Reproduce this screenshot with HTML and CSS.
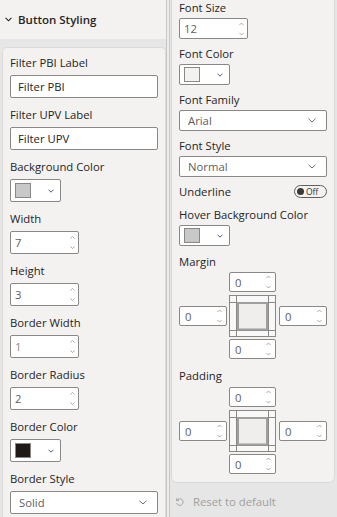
FILE: index.html
```html
<!DOCTYPE html>
<html>
<head>
<meta charset="utf-8">
<link rel="stylesheet" href="styles.css">
</head>
<body>
<div class="app">
  <div class="left">
    <div class="sec-head">
      <svg class="head-chev" width="7" height="5" viewBox="0 0 7 5"><path d="M0.6 0.8 L3.5 3.8 L6.4 0.8" fill="none" stroke="#252423" stroke-width="1.1"/></svg>
      <span>Button Styling</span>
    </div>
    <div class="band">
      <div class="card">
        <div class="field">
          <div class="label">Filter PBI Label</div>
          <div class="textbox">Filter PBI</div>
        </div>
        <div class="field">
          <div class="label">Filter UPV Label</div>
          <div class="textbox">Filter UPV</div>
        </div>
        <div class="field">
          <div class="label">Background Color</div>
          <div class="picker"><span class="swatch sw-gray"></span><svg class="pchev" width="6" height="4" viewBox="0 0 6 4"><path d="M0.5 0.7 L3 3.2 L5.5 0.7" fill="none" stroke="#3a4a66" stroke-width="0.9"/></svg></div>
        </div>
        <div class="field">
          <div class="label">Width</div>
          <div class="spin"><span>7</span><svg width="5" height="15" viewBox="0 0 5 15"><path d="M0.5 3.5 L2.5 1.5 L4.5 3.5 M0.5 11.5 L2.5 13.5 L4.5 11.5" fill="none" stroke="#a19f9d" stroke-width="0.9"/></svg></div>
        </div>
        <div class="field">
          <div class="label">Height</div>
          <div class="spin"><span>3</span><svg width="5" height="15" viewBox="0 0 5 15"><path d="M0.5 3.5 L2.5 1.5 L4.5 3.5 M0.5 11.5 L2.5 13.5 L4.5 11.5" fill="none" stroke="#a19f9d" stroke-width="0.9"/></svg></div>
        </div>
        <div class="field">
          <div class="label">Border Width</div>
          <div class="spin"><span class="light">1</span><svg width="5" height="15" viewBox="0 0 5 15"><path d="M0.5 3.5 L2.5 1.5 L4.5 3.5 M0.5 11.5 L2.5 13.5 L4.5 11.5" fill="none" stroke="#a19f9d" stroke-width="0.9"/></svg></div>
        </div>
        <div class="field">
          <div class="label">Border Radius</div>
          <div class="spin"><span>2</span><svg width="5" height="15" viewBox="0 0 5 15"><path d="M0.5 3.5 L2.5 1.5 L4.5 3.5 M0.5 11.5 L2.5 13.5 L4.5 11.5" fill="none" stroke="#a19f9d" stroke-width="0.9"/></svg></div>
        </div>
        <div class="field">
          <div class="label">Border Color</div>
          <div class="picker"><span class="swatch sw-dark"></span><svg class="pchev" width="6" height="4" viewBox="0 0 6 4"><path d="M0.5 0.7 L3 3.2 L5.5 0.7" fill="none" stroke="#3a4a66" stroke-width="0.9"/></svg></div>
        </div>
        <div class="field">
          <div class="label">Border Style</div>
          <div class="dropdown"><span>Solid</span><svg width="8" height="5" viewBox="0 0 8 5"><path d="M0.5 0.8 L4 4 L7.5 0.8" fill="none" stroke="#605e5c" stroke-width="0.9"/></svg></div>
        </div>
      </div>
    </div>
  </div>
  <div class="gutter"></div>
  <div class="right">
    <div class="rcard">
      <div class="rfield">
        <div class="rlabel">Font Size</div>
        <div class="spin rh"><span>12</span><svg width="5" height="14" viewBox="0 0 5 14"><path d="M0.5 3 L2.5 1 L4.5 3 M0.5 11 L2.5 13 L4.5 11" fill="none" stroke="#a19f9d" stroke-width="0.9"/></svg></div>
      </div>
      <div class="rfield">
        <div class="rlabel">Font Color</div>
        <div class="picker rh"><span class="swatch sw-white"></span><svg class="pchev" width="6" height="4" viewBox="0 0 6 4"><path d="M0.5 0.7 L3 3.2 L5.5 0.7" fill="none" stroke="#3a4a66" stroke-width="0.9"/></svg></div>
      </div>
      <div class="rfield">
        <div class="rlabel">Font Family</div>
        <div class="dropdown rh"><span>Arial</span><svg width="8" height="5" viewBox="0 0 8 5"><path d="M0.5 0.8 L4 4 L7.5 0.8" fill="none" stroke="#605e5c" stroke-width="0.9"/></svg></div>
      </div>
      <div class="rfield">
        <div class="rlabel">Font Style</div>
        <div class="dropdown rh"><span>Normal</span><svg width="8" height="5" viewBox="0 0 8 5"><path d="M0.5 0.8 L4 4 L7.5 0.8" fill="none" stroke="#605e5c" stroke-width="0.9"/></svg></div>
      </div>
      <div class="toggle-row">
        <span>Underline</span>
        <span class="toggle"><span class="dot"></span><span class="off">Off</span></span>
      </div>
      <div class="rfield wide-gap">
        <div class="rlabel">Hover Background Color</div>
        <div class="picker rh"><span class="swatch sw-gray"></span><svg class="pchev" width="6" height="4" viewBox="0 0 6 4"><path d="M0.5 0.7 L3 3.2 L5.5 0.7" fill="none" stroke="#3a4a66" stroke-width="0.9"/></svg></div>
      </div>
      <div class="rlabel">Margin</div>
      <div class="boxgrid">
        <div class="sspin g-top"><span>0</span><svg width="5" height="14" viewBox="0 0 5 14"><path d="M0.5 3 L2.5 1 L4.5 3 M0.5 11 L2.5 13 L4.5 11" fill="none" stroke="#a19f9d" stroke-width="0.9"/></svg></div>
        <div class="sspin g-left"><span>0</span><svg width="5" height="14" viewBox="0 0 5 14"><path d="M0.5 3 L2.5 1 L4.5 3 M0.5 11 L2.5 13 L4.5 11" fill="none" stroke="#a19f9d" stroke-width="0.9"/></svg></div>
        <svg class="g-mid" width="47" height="42" viewBox="0 0 47 42">
          <rect x="0.5" y="0.5" width="46" height="41" fill="#f8f8f8" stroke="#8a8886"/>
          <path d="M7.5 0.5 V41.5 M39.5 0.5 V41.5 M0.5 7.5 H46.5 M0.5 35.5 H46.5" stroke="#8a8886" stroke-width="1" fill="none"/>
          <rect x="9" y="8" width="29" height="26.5" fill="#efeeed" stroke="#a19f9d" stroke-width="2"/>
        </svg>
        <div class="sspin g-right"><span>0</span><svg width="5" height="14" viewBox="0 0 5 14"><path d="M0.5 3 L2.5 1 L4.5 3 M0.5 11 L2.5 13 L4.5 11" fill="none" stroke="#a19f9d" stroke-width="0.9"/></svg></div>
        <div class="sspin g-bottom"><span>0</span><svg width="5" height="14" viewBox="0 0 5 14"><path d="M0.5 3 L2.5 1 L4.5 3 M0.5 11 L2.5 13 L4.5 11" fill="none" stroke="#a19f9d" stroke-width="0.9"/></svg></div>
      </div>
      <div class="rlabel pad-label">Padding</div>
      <div class="boxgrid">
        <div class="sspin g-top"><span>0</span><svg width="5" height="14" viewBox="0 0 5 14"><path d="M0.5 3 L2.5 1 L4.5 3 M0.5 11 L2.5 13 L4.5 11" fill="none" stroke="#a19f9d" stroke-width="0.9"/></svg></div>
        <div class="sspin g-left"><span>0</span><svg width="5" height="14" viewBox="0 0 5 14"><path d="M0.5 3 L2.5 1 L4.5 3 M0.5 11 L2.5 13 L4.5 11" fill="none" stroke="#a19f9d" stroke-width="0.9"/></svg></div>
        <svg class="g-mid" width="47" height="42" viewBox="0 0 47 42">
          <rect x="0.5" y="0.5" width="46" height="41" fill="#f8f8f8" stroke="#8a8886"/>
          <path d="M7.5 0.5 V41.5 M39.5 0.5 V41.5 M0.5 7.5 H46.5 M0.5 35.5 H46.5" stroke="#8a8886" stroke-width="1" fill="none"/>
          <rect x="9" y="8" width="29" height="26.5" fill="#efeeed" stroke="#a19f9d" stroke-width="2"/>
        </svg>
        <div class="sspin g-right"><span>0</span><svg width="5" height="14" viewBox="0 0 5 14"><path d="M0.5 3 L2.5 1 L4.5 3 M0.5 11 L2.5 13 L4.5 11" fill="none" stroke="#a19f9d" stroke-width="0.9"/></svg></div>
        <div class="sspin g-bottom"><span>0</span><svg width="5" height="14" viewBox="0 0 5 14"><path d="M0.5 3 L2.5 1 L4.5 3 M0.5 11 L2.5 13 L4.5 11" fill="none" stroke="#a19f9d" stroke-width="0.9"/></svg></div>
      </div>
    </div>
    <div class="reset">
      <svg width="9" height="9" viewBox="0 0 9 9"><path d="M1.6 1.2 V3.6 H4 M1.9 3.4 A3.3 3.3 0 1 1 1.6 6" fill="none" stroke="#a19f9d" stroke-width="0.9"/></svg>
      <span>Reset to default</span>
    </div>
  </div>
</div>
</body>
</html>
```
FILE: styles.css
```css
* { box-sizing: border-box; }
html, body { margin: 0; padding: 0; }
body {
  width: 337px;
  height: 517px;
  overflow: hidden;
  font-family: "Segoe UI", "Open Sans", "Noto Sans", sans-serif;
  font-size: 11.3px;
  color: #252423;
  background: #e6e6e6;
}
.app { display: flex; height: 517px; }

.left {
  width: 166px;
  flex: none;
  display: flex;
  flex-direction: column;
  background: #f3f2f1;
  overflow: hidden;
}
.sec-head {
  height: 39px;
  flex: none;
  display: flex;
  align-items: center;
  padding-left: 5px;
  gap: 6px;
  font-weight: 600;
  font-size: 11.5px;
}
.band {
  flex: 1;
  background: #e6e6e6;
  padding: 8px 0 0 2px;
}
.card {
  height: 100%;
  background: #f3f2f1;
  border: 1px solid #dcdad8;
  border-bottom: none;
  border-radius: 5px 5px 0 0;
  padding: 7px 7px 0;
}
.field { margin-bottom: 9px; }
.label { line-height: 16px; margin-bottom: 4px; white-space: nowrap; }

.textbox {
  height: 23px;
  border: 1px solid #8a8886;
  border-radius: 2px;
  background: #fff;
  padding-left: 7px;
  line-height: 21px;
}
.picker {
  width: 51px;
  height: 23px;
  border: 1px solid #8a8886;
  border-radius: 2px;
  background: #fff;
  display: flex;
  align-items: center;
  padding-left: 4px;
}
.swatch { width: 16px; height: 15px; border: 1px solid #8a8886; flex: none; }
.sw-gray { background: #c8c8c8; }
.sw-dark { background: #201a17; }
.sw-white { background: #f3f2f1; }
.pchev { margin-left: 17px; }

.spin {
  width: 69px;
  height: 23px;
  border: 1px solid #8a8886;
  border-radius: 2px;
  background: #fff;
  display: flex;
  align-items: center;
  justify-content: space-between;
  padding: 0 3px 0 4px;
  color: #605e5c;
}
.light { color: #8a8886; }
.dropdown {
  height: 23px;
  border: 1px solid #8a8886;
  border-radius: 2px;
  background: #fff;
  display: flex;
  align-items: center;
  justify-content: space-between;
  padding: 0 10px 0 8px;
  color: #605e5c;
}

.gutter {
  width: 4px;
  flex: none;
  border-left: 1px solid #c8c6c4;
  border-right: 1px solid #c8c6c4;
  background: #ececec;
}
.right {
  flex: 1;
  display: flex;
  flex-direction: column;
  background: #e6e6e6;
}
.rcard {
  margin: 0 2px 0 1px;
  background: #f3f2f1;
  border: 1px solid #dcdad8;
  border-top: none;
  border-radius: 0 0 6px 6px;
  padding: 0 7px 8px;
}
.rfield { margin-bottom: 7px; }
.rfield.wide-gap { margin-bottom: 8px; }
.rlabel { line-height: 15px; margin-bottom: 3px; white-space: nowrap; }
.rh { height: 21px; }
.spin.rh { padding-left: 4px; }

.toggle-row {
  height: 14px;
  display: flex;
  align-items: center;
  justify-content: space-between;
  margin-bottom: 9px;
}
.toggle {
  width: 33px;
  height: 13px;
  border: 1px solid #605e5c;
  border-radius: 7px;
  display: flex;
  align-items: center;
  padding-left: 2px;
}
.dot { width: 7px; height: 7px; border-radius: 50%; background: #3b3a39; }
.off { font-size: 8.5px; margin-left: 2px; color: #323130; line-height: 11px; }

.boxgrid {
  display: grid;
  grid-template-columns: 48px 2px 47px 3px 48px;
  grid-template-rows: 20px 3px 42px 2px 20px;
}
.sspin {
  height: 20px;
  border: 1px solid #8a8886;
  border-radius: 2px;
  background: #fff;
  display: flex;
  align-items: center;
  justify-content: space-between;
  padding: 0 4px 0 5px;
  color: #605e5c;
}
.g-top { grid-column: 3; grid-row: 1; }
.g-left { grid-column: 1; grid-row: 3; align-self: center; }
.g-mid { grid-column: 3; grid-row: 3; display: block; }
.g-right { grid-column: 5; grid-row: 3; align-self: center; }
.g-bottom { grid-column: 3; grid-row: 5; }
.pad-label { margin-top: 9px; margin-bottom: 4px; }

.reset {
  flex: 1;
  display: flex;
  align-items: center;
  padding: 3px 0 0 5px;
  gap: 9px;
  color: #a19f9d;
}
```
